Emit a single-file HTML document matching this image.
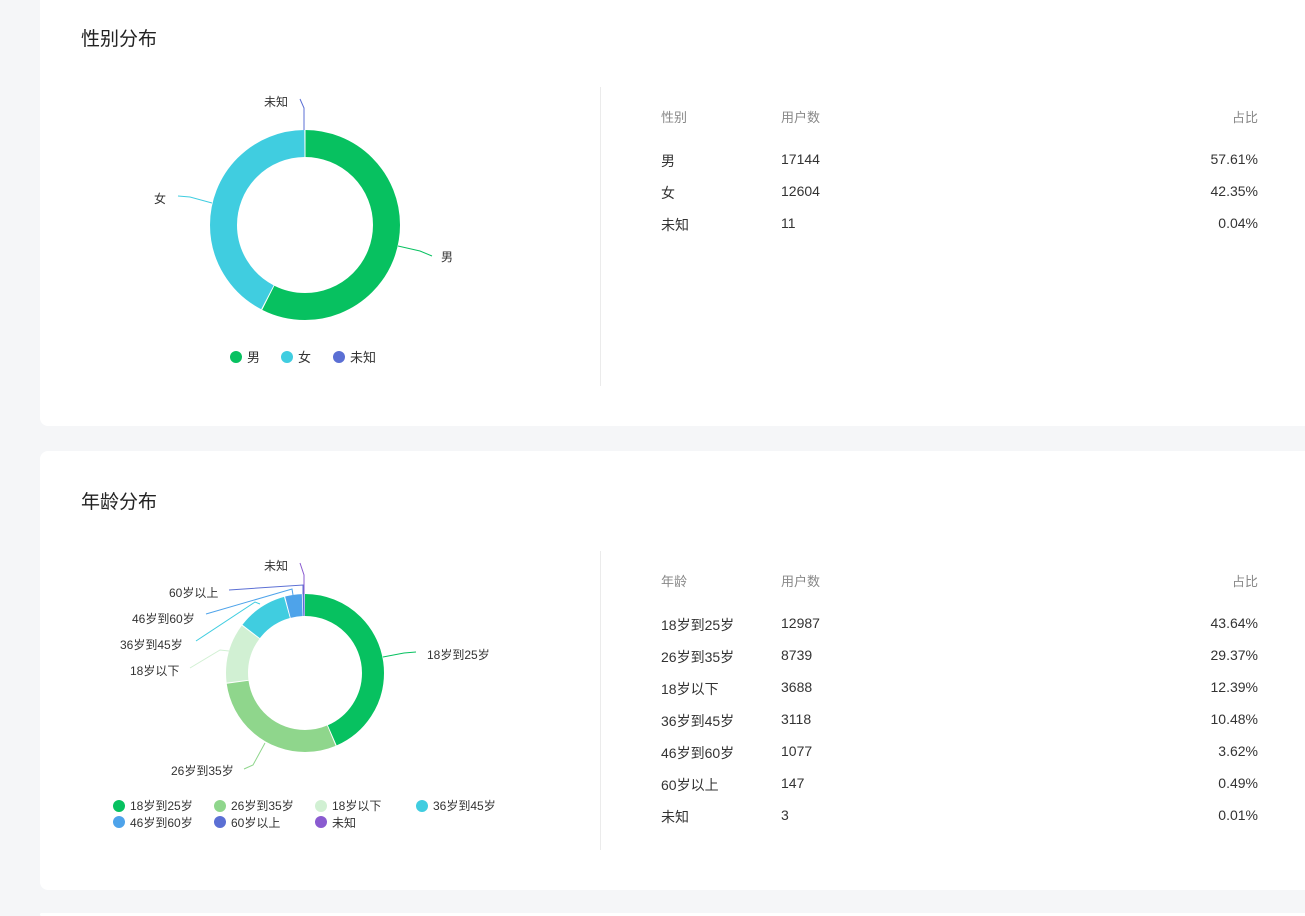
<!DOCTYPE html>
<html style="overflow:hidden;width:1305px;height:916px"><head><meta charset="utf-8"><style>
body{margin:0;width:1305px;height:916px;background:#f5f6f8;position:relative;overflow:hidden;font-family:"Liberation Sans","Noto Sans CJK SC",sans-serif;color:#333}
.card{position:absolute;left:40px;width:1265px;background:#fff;border-radius:8px 0 0 8px}
.t{position:absolute;left:81px;font-size:19px;color:#222}
.div{position:absolute;left:600px;width:1px;background:#ebebeb}
.tb{position:absolute;left:661px;width:597px;font-size:14px}
.tb div{position:absolute;left:0;right:0;height:20px}
.tb span{position:absolute;top:0}
.tb .c2{left:120px}.tb .c3{right:0}
.tb .h{color:#888;font-size:13px}
svg text{font-family:"Liberation Sans","Noto Sans CJK SC",sans-serif}
</style></head><body>
<div class="card" style="top:-10px;height:436px"></div>
<div class="card" style="top:451px;height:439px"></div>
<div class="card" style="top:913px;height:3px"></div>
<div class="t" style="top:24px">性别分布</div>
<div class="t" style="top:487px">年龄分布</div>
<div class="div" style="top:87px;height:299px"></div>
<div class="div" style="top:551px;height:299px"></div>

<svg style="position:absolute;left:0;top:0" width="600" height="900">
<g transform="rotate(-90 305 225)" fill="none" stroke-width="27">
<circle cx="305" cy="225" r="81.5" stroke="#07c160" stroke-dasharray="294.0 600" stroke-dashoffset="0"/>
<circle cx="305" cy="225" r="81.5" stroke="#40cde0" stroke-dasharray="216.3 600" stroke-dashoffset="-295"/>
<circle cx="305" cy="225" r="81.5" stroke="#5b6fd4" stroke-dasharray="0.6 600" stroke-dashoffset="-511.4"/>
</g>
<line x1="305" y1="225" x2="305" y2="130" stroke="#fff" stroke-width="1"/>
<polyline points="398,246 420,251 432,256" fill="none" stroke="#07c160"/>
<polyline points="212,203 190,197 178,196" fill="none" stroke="#40cde0"/>
<polyline points="304,130 304,108 300,99" fill="none" stroke="#5b6fd4"/>
<g font-size="12" fill="#333">
<text x="441" y="261">男</text><text x="154" y="203">女</text><text x="264" y="106">未知</text>
</g>
<g font-size="13" fill="#333">
<circle cx="236" cy="357" r="6" fill="#07c160"/><text x="247" y="362">男</text>
<circle cx="287" cy="357" r="6" fill="#40cde0"/><text x="298" y="362">女</text>
<circle cx="339" cy="357" r="6" fill="#5b6fd4"/><text x="350" y="362">未知</text>
</g>

<g transform="rotate(-90 305 673)" fill="none" stroke-width="22">
<circle cx="305" cy="673" r="68" stroke="#07c160" stroke-dasharray="185.5 600"/>
<circle cx="305" cy="673" r="68" stroke="#8fd68c" stroke-dasharray="124.5 600" stroke-dashoffset="-186.5"/>
<circle cx="305" cy="673" r="68" stroke="#d1f0d3" stroke-dasharray="52 600" stroke-dashoffset="-312"/>
<circle cx="305" cy="673" r="68" stroke="#40cde0" stroke-dasharray="43.8 600" stroke-dashoffset="-365"/>
<circle cx="305" cy="673" r="68" stroke="#4ea3ea" stroke-dasharray="14.5 600" stroke-dashoffset="-409.8"/>
<circle cx="305" cy="673" r="68" stroke="#5b6fd4" stroke-dasharray="1.6 600" stroke-dashoffset="-425"/>
</g>
<polyline points="383,657 404,653 416,652" fill="none" stroke="#07c160"/>
<polyline points="265,743 253,765 244,769" fill="none" stroke="#8fd68c"/>
<polyline points="229,651 220,650 190,668" fill="none" stroke="#d1f0d3"/>
<polyline points="260,604 255,602 196,641" fill="none" stroke="#40cde0"/>
<polyline points="293,595 292,589 206,614" fill="none" stroke="#4ea3ea"/>
<polyline points="303,594 303,585 229,590" fill="none" stroke="#5b6fd4"/>
<polyline points="304,594 304,575 300,563" fill="none" stroke="#8a5bd0"/>
<g font-size="12" fill="#333">
<text x="427" y="659">18岁到25岁</text>
<text x="171" y="775">26岁到35岁</text>
<text x="130" y="675">18岁以下</text>
<text x="120" y="649">36岁到45岁</text>
<text x="132" y="623">46岁到60岁</text>
<text x="169" y="597">60岁以上</text>
<text x="264" y="570">未知</text>
</g>
<g font-size="12" fill="#333">
<circle cx="119" cy="806" r="6" fill="#07c160"/><text x="130" y="810">18岁到25岁</text>
<circle cx="220" cy="806" r="6" fill="#8fd68c"/><text x="231" y="810">26岁到35岁</text>
<circle cx="321" cy="806" r="6" fill="#d1f0d3"/><text x="332" y="810">18岁以下</text>
<circle cx="422" cy="806" r="6" fill="#40cde0"/><text x="433" y="810">36岁到45岁</text>
<circle cx="119" cy="822" r="6" fill="#4ea3ea"/><text x="130" y="827">46岁到60岁</text>
<circle cx="220" cy="822" r="6" fill="#5b6fd4"/><text x="231" y="827">60岁以上</text>
<circle cx="321" cy="822" r="6" fill="#8a5bd0"/><text x="332" y="827">未知</text>
</g>
</svg>

<div class="tb" style="top:0">
<div class="h" style="top:107px"><span>性别</span><span class="c2">用户数</span><span class="c3">占比</span></div>
<div style="top:151px"><span>男</span><span class="c2">17144</span><span class="c3">57.61%</span></div>
<div style="top:183px"><span>女</span><span class="c2">12604</span><span class="c3">42.35%</span></div>
<div style="top:215px"><span>未知</span><span class="c2">11</span><span class="c3">0.04%</span></div>
</div>
<div class="tb" style="top:0">
<div class="h" style="top:571px"><span>年龄</span><span class="c2">用户数</span><span class="c3">占比</span></div>
<div style="top:615px"><span>18岁到25岁</span><span class="c2">12987</span><span class="c3">43.64%</span></div>
<div style="top:647px"><span>26岁到35岁</span><span class="c2">8739</span><span class="c3">29.37%</span></div>
<div style="top:679px"><span>18岁以下</span><span class="c2">3688</span><span class="c3">12.39%</span></div>
<div style="top:711px"><span>36岁到45岁</span><span class="c2">3118</span><span class="c3">10.48%</span></div>
<div style="top:743px"><span>46岁到60岁</span><span class="c2">1077</span><span class="c3">3.62%</span></div>
<div style="top:775px"><span>60岁以上</span><span class="c2">147</span><span class="c3">0.49%</span></div>
<div style="top:807px"><span>未知</span><span class="c2">3</span><span class="c3">0.01%</span></div>
</div>
</body></html>
